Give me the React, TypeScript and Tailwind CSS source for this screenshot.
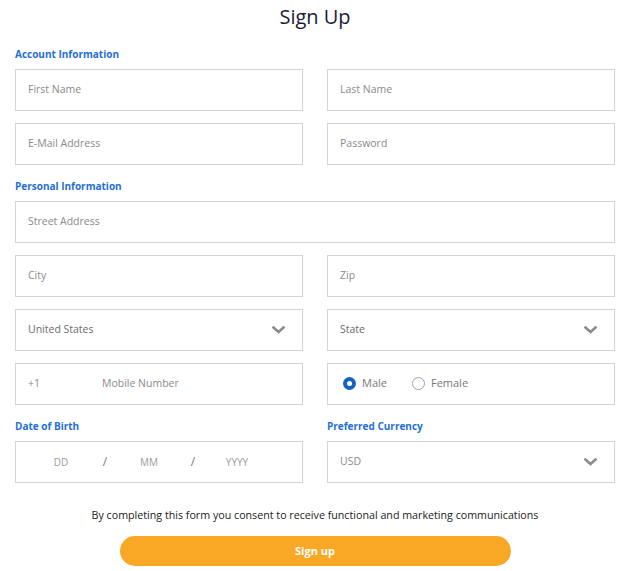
import React from "react";

const font = { fontFamily: '"Open Sans", "Noto Sans", Arial, sans-serif' };

function Chevron() {
  return (
    <svg width="13" height="8" viewBox="0 0 13 8" className="shrink-0">
      <polyline points="1.5,1.5 6.5,6 11.5,1.5" fill="none" stroke="#8c8c8c" strokeWidth="2.6" strokeLinecap="square" />
    </svg>
  );
}

function Box({ children, className = "" }: { children?: React.ReactNode; className?: string }) {
  return (
    <div className={`h-[42px] border border-[#d2d2d2] bg-white flex items-center ${className}`}>{children}</div>
  );
}

function Field({ label }: { label: string }) {
  return (
    <Box className="pl-[12px]">
      <span className="text-[10.5px] text-[#8a8a8a]">{label}</span>
    </Box>
  );
}

function Select({ value, dark = false }: { value: string; dark?: boolean }) {
  return (
    <Box className="pl-[12px] pr-[17px] justify-between">
      <span className={`text-[10.5px] ${dark ? "text-[#6a6a6a]" : "text-[#8a8a8a]"}`}>{value}</span>
      <Chevron />
    </Box>
  );
}

function SectionLabel({ children }: { children: React.ReactNode }) {
  return (
    <div className="h-[36px] pt-[6px] flex items-center">
      <span className="text-[10px] font-bold text-[#1f6fd6]">{children}</span>
    </div>
  );
}

export default function App() {
  return (
    <div className="w-[631px] h-[571px] bg-white pl-[15px] pr-[16px]" style={font}>
      <div className="h-[33px] flex items-center justify-center">
        <h1 className="text-[20px] leading-none text-[#1c1b33]">Sign Up</h1>
      </div>

      <SectionLabel>Account Information</SectionLabel>
      <div className="grid grid-cols-2 gap-x-[24px] gap-y-[12px]">
        <Field label="First Name" />
        <Field label="Last Name" />
        <Field label="E-Mail Address" />
        <Field label="Password" />
      </div>

      <SectionLabel>Personal Information</SectionLabel>
      <div className="grid grid-cols-2 gap-x-[24px] gap-y-[12px]">
        <div className="col-span-2">
          <Field label="Street Address" />
        </div>
        <Field label="City" />
        <Field label="Zip" />
        <Select value="United States" dark />
        <Select value="State" dark />
        <Box className="pl-[12px] pb-[1px]">
          <span className="w-[74px] text-[10.5px] text-[#8a8a8a]">+1</span>
          <span className="text-[10.5px] text-[#8a8a8a]">Mobile Number</span>
        </Box>
        <Box className="pl-[15px] pb-[2px]">
          <label className="flex items-center">
            <span className="w-[13px] h-[13px] rounded-full bg-[#1565c0] flex items-center justify-center">
              <span className="w-[5px] h-[5px] rounded-full bg-white" />
            </span>
            <span className="ml-[6px] text-[11px] text-[#777777]">Male</span>
          </label>
          <label className="flex items-center ml-[25px]">
            <span className="w-[13px] h-[13px] rounded-full border border-[#a0a0a0] bg-white" />
            <span className="ml-[6px] text-[11px] text-[#777777]">Female</span>
          </label>
        </Box>
      </div>

      <div className="grid grid-cols-2 gap-x-[24px]">
        <div>
          <SectionLabel>Date of Birth</SectionLabel>
          <Box className="pl-[23px]">
            {["DD", "/", "MM", "/", "YYYY"].map((t, i) => (
              <span
                key={i}
                className={`w-[44px] text-center text-[10px] ${t === "/" ? "text-[#777777] text-[12px]" : "text-[#9a9a9a]"}`}
              >
                {t}
              </span>
            ))}
          </Box>
        </div>
        <div>
          <SectionLabel>Preferred Currency</SectionLabel>
          <Select value="USD" />
        </div>
      </div>

      <p className="mt-[24px] h-[16px] leading-[16px] text-center text-[10.7px] text-[#222222]">
        By completing this form you consent to receive functional and marketing communications
      </p>

      <div className="mt-[13px] flex justify-center">
        <button className="w-[391px] h-[30px] rounded-full bg-[#f9a826] text-white text-[11px] font-bold">
          Sign up
        </button>
      </div>
    </div>
  );
}
